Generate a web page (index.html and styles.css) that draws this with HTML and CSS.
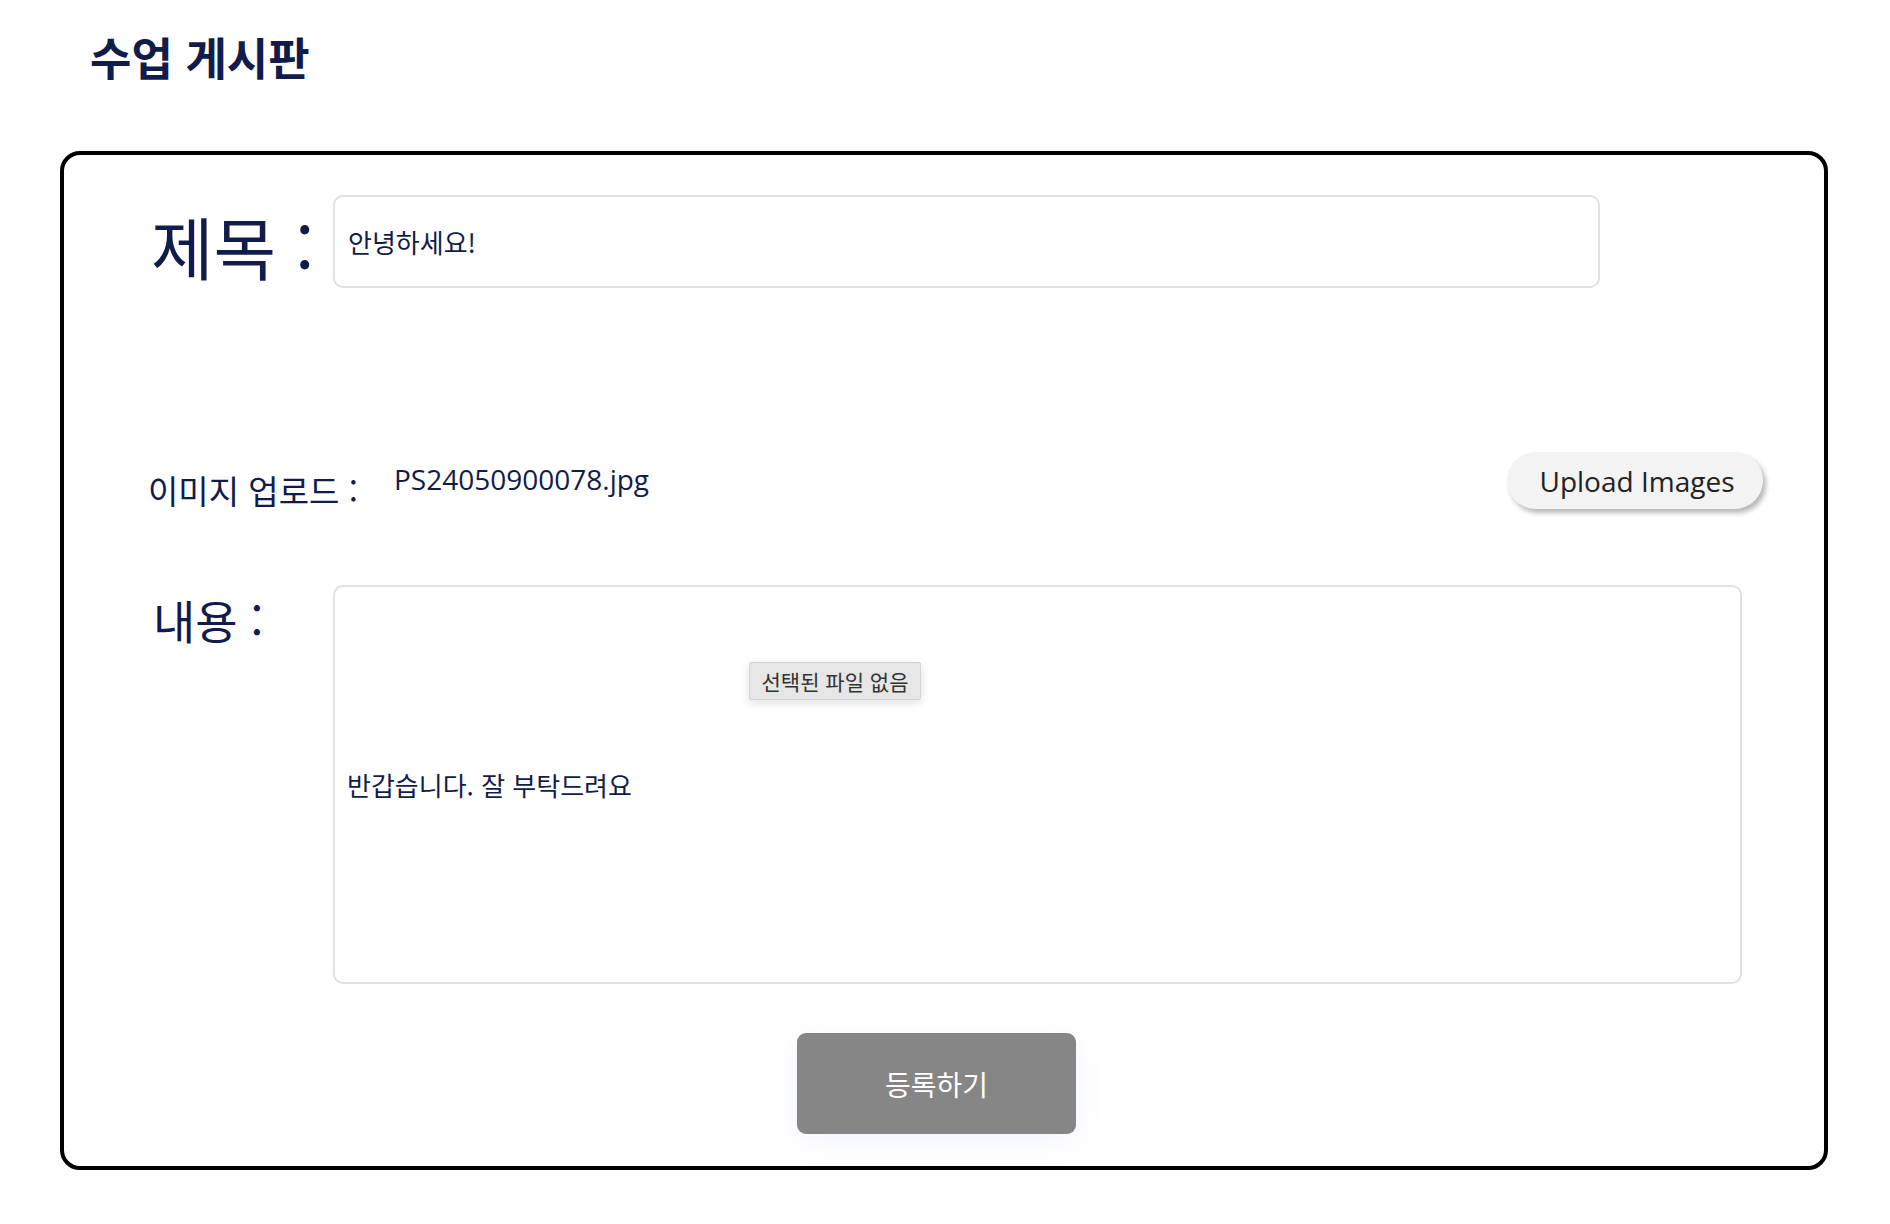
FILE: index.html
```html
<!DOCTYPE html>
<html lang="ko">
<head>
<meta charset="utf-8">
<title>수업 게시판</title>
<link rel="stylesheet" href="styles.css">
</head>
<body>
<header class="page-header">
  <h1 class="page-title">수업 게시판</h1>
</header>
<form class="card">
  <div class="row row-title">
    <label class="label label-xl">제목 :</label>
    <div class="field field-title">안녕하세요!</div>
  </div>
  <div class="row row-upload">
    <span class="label label-sm">이미지 업로드 :</span>
    <span class="filename">PS24050900078.jpg</span>
    <button type="button" class="upload-btn">Upload Images</button>
  </div>
  <div class="row row-content">
    <label class="label label-md">내용 :</label>
    <div class="field field-body">반갑습니다. 잘 부탁드려요</div>
  </div>
  <span class="file-chip">선택된 파일 없음</span>
  <div class="actions">
    <button type="button" class="submit-btn">등록하기</button>
  </div>
</form>
</body>
</html>
```

FILE: styles.css
```css
* { box-sizing: border-box; }

body {
  margin: 0;
  background: #ffffff;
  font-family: "Noto Sans CJK KR", "Noto Sans", sans-serif;
  color: #111c4a;
}

.page-header {
  height: 151px;
  padding: 26px 0 0 90px;
}

.page-title {
  margin: 0;
  font-size: 45px;
  line-height: 62px;
  font-weight: 700;
  color: #111c4a;
}

.card {
  position: relative;
  margin: 0 62px 0 60px;
  height: 1019px;
  border: 4px solid #000;
  border-radius: 20px;
  padding: 40px 0 32px 89px;
}

.row {
  display: flex;
  align-items: center;
}

.label {
  color: #111c4a;
  white-space: nowrap;
}

.row-title {
  height: 93px;
}

.label-xl {
  width: 180px;
  font-size: 68px;
  line-height: 1;
  margin-left: -2px;
  margin-right: 2px;
  margin-top: 8px;
}

.field {
  border: 2px solid #e1e1e1;
  border-radius: 10px;
  background: #fff;
  color: #111c4a;
  font-size: 26px;
}

.field-title {
  width: 1267px;
  height: 93px;
  display: flex;
  align-items: center;
  padding-left: 13px;
}

.row-upload {
  margin-top: 164px;
  height: 57px;
  padding-right: 61px;
}

.label-sm {
  width: 246px;
  margin-left: -5px;
  font-size: 33px;
  line-height: 1;
  margin-top: 20px;
}

.filename {
  font-family: "Open Sans", sans-serif;
  font-size: 28px;
  color: #111c4a;
  margin-top: -4px;
}

.upload-btn {
  margin-left: auto;
  width: 256px;
  height: 57px;
  border: none;
  border-radius: 29px;
  background: #f3f3f3;
  font-family: "Open Sans", sans-serif;
  font-size: 28px;
  color: #222;
  box-shadow: 3px 4px 5px rgba(0, 0, 0, 0.28);
  padding: 0 0 0 4px;
}

.row-content {
  margin-top: 76px;
  align-items: flex-start;
}

.label-md {
  width: 180px;
  font-size: 46px;
  line-height: 1;
  margin-top: 11px;
}

.field-body {
  width: 1409px;
  height: 399px;
  display: flex;
  align-items: center;
  padding-left: 12px;
}

.file-chip {
  position: absolute;
  left: 685px;
  top: 507px;
  width: 172px;
  height: 38px;
  display: flex;
  align-items: center;
  justify-content: center;
  background: #e6e6e6;
  border: 1px solid #d4d4d4;
  border-radius: 2px;
  font-size: 21px;
  color: #333;
  box-shadow: 0 3px 10px rgba(0, 0, 0, 0.12);
}

.actions {
  margin-top: 49px;
  padding-left: 644px;
}

.submit-btn {
  width: 279px;
  height: 101px;
  border: none;
  border-radius: 9px;
  background: #868686;
  color: #fff;
  font-family: "Noto Sans CJK KR", sans-serif;
  font-size: 28px;
  box-shadow: 0 6px 30px rgba(90, 110, 200, 0.08);
}
```
